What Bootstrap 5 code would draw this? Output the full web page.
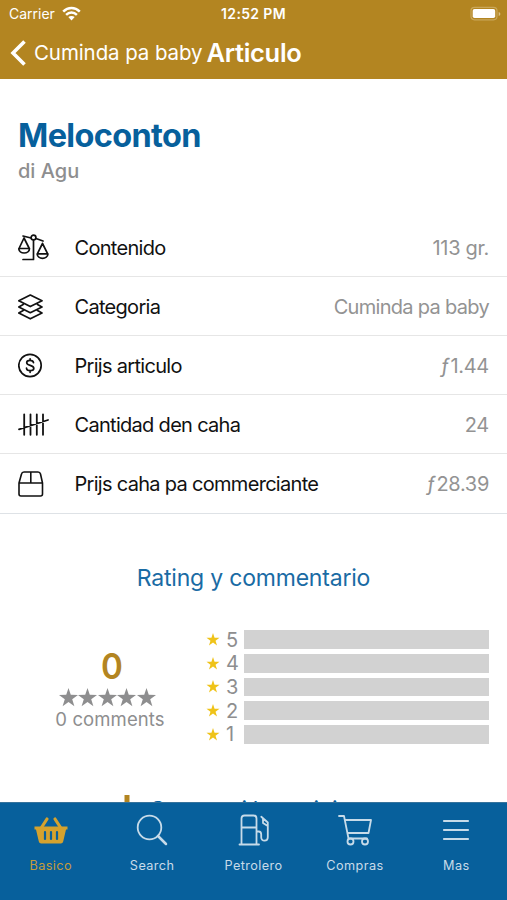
<!DOCTYPE html>
<html lang="pap">
<head>
<meta charset="utf-8">
<meta name="viewport" content="width=device-width, initial-scale=1">
<title>Articulo</title>
<link href="https://cdn.jsdelivr.net/npm/bootstrap@5.3.0/dist/css/bootstrap.min.css" rel="stylesheet">
<style>
  :root { --gold: #b38521; --blue: #07609c; --grey: #8e8e8f; }
  body { font-family: Inter, "Liberation Sans", sans-serif; color: #111; line-height: 1.2; }
  svg { display: block; flex: none; fill: none; stroke: currentColor; stroke-linecap: round; stroke-linejoin: round; }
  .screen { height: 900px; }
  .top { background: var(--gold); height: 79px; }
  .status { height: 28px; padding: 0 6px 0 9px; font-size: 14px; }
  .status > * { flex: 1 1 0; }
  .status .wifi { margin-left: 7px; stroke-linecap: butt; }
  .clock { font-weight: 600; font-size: 14px; letter-spacing: .35px; padding-right: 3px; }
  .titlebar { height: 49px; padding-left: 9px; }
  .chevron { stroke-linecap: butt; stroke-linejoin: miter; }
  .back { font-size: 20.5px; margin-left: 8px; padding-top: 2px; letter-spacing: -.1px; }
  .heading { font-size: 25.5px; font-weight: 600; margin-left: 4px; padding-top: 1px; letter-spacing: -.3px; }
  .intro { padding: 38px 18px 0; height: 139px; }
  .product { color: var(--blue); font-size: 32.5px; font-weight: 700; line-height: 38px; letter-spacing: -.65px; }
  .brand { color: var(--grey); font-size: 20px; font-weight: 500; line-height: 24px; margin-top: 4px; }
  .facts .list-group-item { height: 59.1px; padding: 1px 18px 0; border-color: #e6e6e6; border-width: 0 0 1.5px; color: #111; font-size: 20px; letter-spacing: -.7px; }
  .facts .glyph { width: 56.500px; }
  .facts .amount { color: #939393; }
  .facts .figure-text { letter-spacing: -.3px; }
  .florin { display: inline-block; transform: skewX(-8deg); width: 10px; text-align: center; }
  .section-title { color: #1a6ba4; font-size: 23px; margin-top: 50px; line-height: 28px; letter-spacing: -.2px; }
  .ratings { padding: 0 18px 0 18px; margin-top: 35.300px; }
  .score { width: 188px; padding-top: 18px; }
  .total { color: var(--gold); font-size: 36px; font-weight: 600; line-height: 40px; transform: scaleX(.92); }
  .stars { color: var(--grey); gap: .5px; margin-top: 2px; margin-right: 10px; }
  .count { color: var(--grey); font-size: 18.5px; line-height: 24px; margin-right: 4px; letter-spacing: .1px; }
  .level { height: 23.700px; color: var(--grey); font-size: 20px; }
  .level svg { color: #efc319; margin-right: 6px; }
  .level .num { width: 18px; }
  .track { height: 18.500px; background: #d2d2d2; }
  .share { margin: 48.700px 0 0 120px; color: var(--blue); font-size: 23px; line-height: 28px; letter-spacing: -.3px; }
  .share span { padding-top: 1px; margin-left: 13px; }
  .plus { stroke: var(--gold); stroke-linecap: butt; }
  .tabs { background: var(--blue); height: 98px; border-top: 1px solid #36739c; color: #c7dbe9; }
  .tabs .nav-link { color: inherit; padding: 10px 0 0; font-size: 12.7px; letter-spacing: .4px; line-height: 16px; }
  .tabs .nav-link.active { color: #c49b3b; }
  .tabs svg { margin-bottom: 11px; }
</style>
<script src="https://cdn.jsdelivr.net/npm/bootstrap@5.3.0/dist/js/bootstrap.bundle.min.js"></script>
</head>
<body>
<svg width="0" height="0" class="position-absolute"><defs><path id="star" stroke="none" fill="currentColor" d="M10 0 12.4 7.2 20 7.3 13.9 11.9 16.2 19.2 10 14.8 3.8 19.2 6.1 11.9 0 7.3 7.6 7.2z"/></defs></svg>
<div class="screen d-flex flex-column overflow-hidden bg-white">
  <header class="top text-white flex-shrink-0">
    <div class="status d-flex align-items-center">
      <div class="d-flex align-items-center"><span>Carrier</span>
        <svg class="wifi" width="19" height="15" viewBox="0 0 19 15" stroke-width="2.5"><path d="M1.2 5.7C6 .9 13 .9 17.8 5.7M4.1 8.8c3.1-3 7.7-3 10.8 0"/><path d="M9.5 14.5 6.3 11.1c1.8-1.6 4.6-1.6 6.4 0z" fill="currentColor" stroke="none"/></svg>
      </div>
      <div class="clock text-center">12:52 PM</div>
      <div class="d-flex justify-content-end"><svg width="31" height="16" viewBox="0 0 31 16"><rect x="1" y="1.300" width="26" height="12.500" rx="3.500" stroke="#c9a75a" stroke-width="1.200"/><rect x="2.700" y="3" width="22.500" height="9" rx="1.800" fill="#fff" stroke="none"/><path d="M28.700 6v4q1.700-.7 1.700-2t-1.700-2z" fill="#d9bf86" stroke="none"/></svg></div>
    </div>
    <div class="titlebar d-flex align-items-center">
      <svg class="chevron" width="17" height="26" viewBox="0 0 17 26" stroke-width="3.600"><path d="M15.500 1.500 4 13l11.500 11.500"/></svg>
      <span class="back">Cuminda pa baby</span>
      <span class="heading">Articulo</span>
    </div>
  </header>

  <main class="flex-grow-1 overflow-hidden">
    <section class="intro">
      <h1 class="product mb-0">Meloconton</h1>
      <p class="brand mb-0">di Agu</p>
    </section>

    <ul class="facts list-group list-group-flush border-bottom">
      <li class="list-group-item d-flex align-items-center"><span class="glyph"><svg width="31" height="27" viewBox="0 0 31 27" stroke-width="1.700"><path d="M5 2l8 2M18 4.500l7 2.500M5 25.500h10.500V6M6 4 1 14.500M6 4l5.300 10.500M.8 14.500h10.700c0 6-10.700 6-10.700 0zM24.500 9.500l-5.200 10.300M24.500 9.500l5.200 10.300M19.200 19.800h10.700c0 6-10.700 6-10.700 0z"/><circle cx="15.500" cy="3.500" r="2.400"/></svg></span><span>Contenido</span><span class="amount figure-text ms-auto">113 gr.</span></li>
      <li class="list-group-item d-flex align-items-center"><span class="glyph"><svg width="25" height="26" viewBox="0 0 25 26" stroke-width="1.700"><path d="M12.300 1 24 6.800 12.300 12.600.8 6.800zM5.200 10.500.8 12.900l11.500 5.800L24 12.900l-4.500-2.400M5.200 16.600.8 19l11.500 5.800L24 19l-4.500-2.400"/></svg></span><span>Categoria</span><span class="amount ms-auto">Cuminda pa baby</span></li>
      <li class="list-group-item d-flex align-items-center"><span class="glyph"><svg width="25" height="25" viewBox="0 0 25 25" stroke-width="1.700"><circle cx="12" cy="12.500" r="11.200"/><path d="M15.500 9.600c-.4-3-6.800-3-6.800.1 0 3.400 7.100 1.900 7.100 5.500 0 3.200-7.100 3.200-7.300 0M12.100 5.800v1.600M12.100 17.600v1.700"/></svg></span><span>Prijs articulo</span><span class="amount figure-text ms-auto"><span class="florin">ƒ</span>1.44</span></li>
      <li class="list-group-item d-flex align-items-center"><span class="glyph"><svg width="31" height="23" viewBox="0 0 31 23" stroke-width="1.800"><path d="M6.200 1.300v20.500M12.500 1.300v20.500M18.800 1.300v20.500M25 1.300v20.500M1 16.300 30 7"/></svg></span><span>Cantidad den caha</span><span class="amount figure-text ms-auto">24</span></li>
      <li class="list-group-item d-flex align-items-center"><span class="glyph"><svg width="26" height="26" viewBox="0 0 26 26" stroke-width="1.600"><path d="M1 12v11q0 2 2 2h19.500q2 0 2-2V12L22.500 3Q22 1 20 1H6Q4 1 3.500 3zh23.500M12.800 1v11"/></svg></span><span>Prijs caha pa commerciante</span><span class="amount figure-text ms-auto"><span class="florin">ƒ</span>28.39</span></li>
    </ul>

    <h2 class="section-title text-center fw-normal mb-0">Rating y commentario</h2>
    <section class="ratings d-flex">
      <div class="score d-flex flex-column align-items-center">
        <div class="total">0</div>
        <div class="stars d-flex">
          <svg width="19" height="19" viewBox="0 0 20 20"><use href="#star"/></svg><svg width="19" height="19" viewBox="0 0 20 20"><use href="#star"/></svg><svg width="19" height="19" viewBox="0 0 20 20"><use href="#star"/></svg><svg width="19" height="19" viewBox="0 0 20 20"><use href="#star"/></svg><svg width="19" height="19" viewBox="0 0 20 20"><use href="#star"/></svg>
        </div>
        <div class="count">0 comments</div>
      </div>
      <div class="flex-grow-1">
        <div class="level d-flex align-items-center"><svg width="14" height="13" viewBox="0 0 20 20"><use href="#star"/></svg><span class="num">5</span><div class="track flex-grow-1"></div></div>
        <div class="level d-flex align-items-center"><svg width="14" height="13" viewBox="0 0 20 20"><use href="#star"/></svg><span class="num">4</span><div class="track flex-grow-1"></div></div>
        <div class="level d-flex align-items-center"><svg width="14" height="13" viewBox="0 0 20 20"><use href="#star"/></svg><span class="num">3</span><div class="track flex-grow-1"></div></div>
        <div class="level d-flex align-items-center"><svg width="14" height="13" viewBox="0 0 20 20"><use href="#star"/></svg><span class="num">2</span><div class="track flex-grow-1"></div></div>
        <div class="level d-flex align-items-center"><svg width="14" height="13" viewBox="0 0 20 20"><use href="#star"/></svg><span class="num">1</span><div class="track flex-grow-1"></div></div>
      </div>
    </section>
    <div class="share d-flex"><svg class="plus" width="16" height="24" viewBox="0 0 16 24" stroke-width="5"><path d="M7 0v22M0 11h14"/></svg><span>Comparti bo opinion</span></div>
  </main>

  <nav class="tabs nav nav-justified flex-nowrap flex-shrink-0 align-items-start">
    <a class="nav-link active d-flex flex-column align-items-center" href="#"><svg width="34" height="34" viewBox="0 0 34 34"><path d="M.5 13.500h33v3H32L29.200 28.500q-.4 2-2.400 2H7.200q-2 0-2.400-2L2 16.500H.5z" fill="#d4a22e" stroke="none"/><path d="M7.500 14.500 13 6M26.500 14.500 21 6" stroke="#d4a22e" stroke-width="3.200"/><path d="M11 19v7M17 19v7M23 19v7" stroke="#07609c" stroke-width="2.200"/></svg>Basico</a>
    <a class="nav-link d-flex flex-column align-items-center" href="#"><svg width="34" height="34" viewBox="0 0 34 34" stroke-width="1.800"><circle cx="14.500" cy="14.500" r="11.800"/><path d="m23 23 8 8" stroke-width="2.500"/></svg>Search</a>
    <a class="nav-link d-flex flex-column align-items-center" href="#"><svg width="34" height="34" viewBox="0 0 34 34" stroke-width="1.800"><path d="M2.500 31.500H22M4.500 31V5.500q0-3 3-3h9q3 0 3 3V31M4.500 14.500h15M19.500 18.500h2.200q2.500 0 2.500 3v2.700c0 4.800 6.600 4.400 6.600 0V9.500l-6.500-5.700M26 5.500V10l4.700 3"/></svg>Petrolero</a>
    <a class="nav-link d-flex flex-column align-items-center" href="#"><svg width="34" height="34" viewBox="0 0 34 34" stroke-width="1.800"><path d="M1 3h5l4.500 22.500H29M7 7h26l-2.500 13H9.700"/><circle cx="12.500" cy="28.500" r="3"/><circle cx="27" cy="28.500" r="3"/></svg>Compras</a>
    <a class="nav-link d-flex flex-column align-items-center" href="#"><svg width="34" height="34" viewBox="0 0 34 34" stroke-width="2.200"><path d="M5 8h24M5 17h24M5 26h24"/></svg>Mas</a>
  </nav>
</div>
</body>
</html>
